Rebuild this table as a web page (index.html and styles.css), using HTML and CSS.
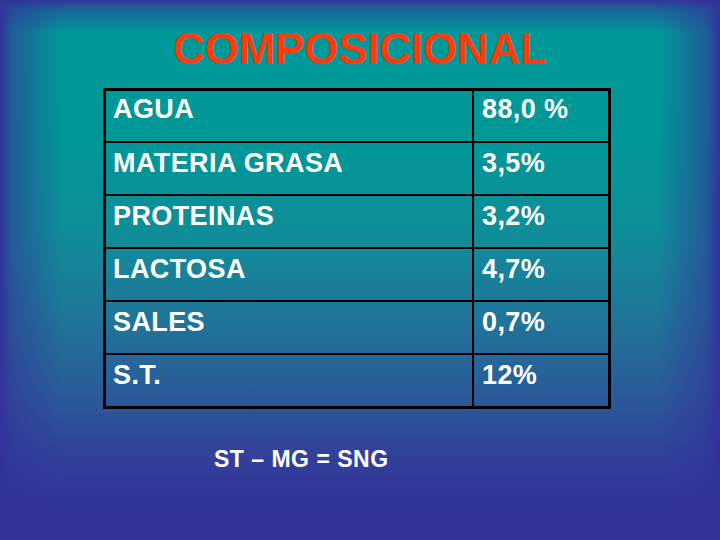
FILE: index.html
```html
<!DOCTYPE html>
<html lang="es">
<head>
<meta charset="utf-8">
<title>Composicional</title>
<link rel="stylesheet" href="styles.css">
</head>
<body>
<div class="slide">
  <h1 class="title">COMPOSICIONAL</h1>
  <table class="comp">
    <tr><td class="name">AGUA</td><td class="val">88,0 %</td></tr>
    <tr><td class="name">MATERIA GRASA</td><td class="val">3,5%</td></tr>
    <tr><td class="name">PROTEINAS</td><td class="val">3,2%</td></tr>
    <tr><td class="name">LACTOSA</td><td class="val">4,7%</td></tr>
    <tr><td class="name">SALES</td><td class="val">0,7%</td></tr>
    <tr><td class="name">S.T.</td><td class="val">12%</td></tr>
  </table>
  <p class="formula">ST – MG = SNG</p>
</div>
</body>
</html>
```
FILE: styles.css
```css
html, body {
  margin: 0;
  padding: 0;
}
body {
  width: 720px;
  height: 540px;
  overflow: hidden;
  font-family: "Liberation Sans", Arial, sans-serif;
}
.slide {
  width: 720px;
  height: 540px;
  box-sizing: border-box;
  padding-top: 24px;
  display: flex;
  flex-direction: column;
  background:
    linear-gradient(to right, #333399 0, rgba(51,51,153,0.55) 12px, rgba(51,51,153,0) 62px, rgba(51,51,153,0) 658px, rgba(51,51,153,0.55) 706px, #333399 720px),
    linear-gradient(to bottom, #333399 0, rgba(51,51,153,0.5) 9px, rgba(51,51,153,0) 34px),
    linear-gradient(to bottom, #009999 0, #009797 140px, #0f8e99 230px, #1e7899 310px, #2b5c9a 390px, #323f99 460px, #333399 510px);
}
.title {
  margin: 0;
  font-size: 44px;
  line-height: 50px;
  font-weight: bold;
  color: #fb3c0c;
  text-align: center;
  letter-spacing: -0.2px;
}
.comp {
  margin: 14px 0 0 103px;
  width: 508px;
  border-collapse: separate;
  border-spacing: 0;
  border: 3px solid #000;
  color: #fff;
  font-size: 27px;
  font-weight: bold;
  letter-spacing: 0.4px;
}
.comp td {
  height: 53px;
  box-sizing: border-box;
  padding: 5px 0 0 7px;
  vertical-align: top;
  line-height: 30px;
  border-top: 2px solid #000;
}
.comp tr:first-child td {
  height: 50px;
  padding-top: 3px;
  border-top: 0;
}
.comp td.name {
  width: 368px;
  border-right: 2px solid #000;
}
.comp td.val {
  padding-left: 8px;
}
.formula {
  margin: 36px 0 0 214px;
  color: #fff;
  font-size: 23px;
  font-weight: bold;
  letter-spacing: 0.5px;
  line-height: 28px;
}
```
